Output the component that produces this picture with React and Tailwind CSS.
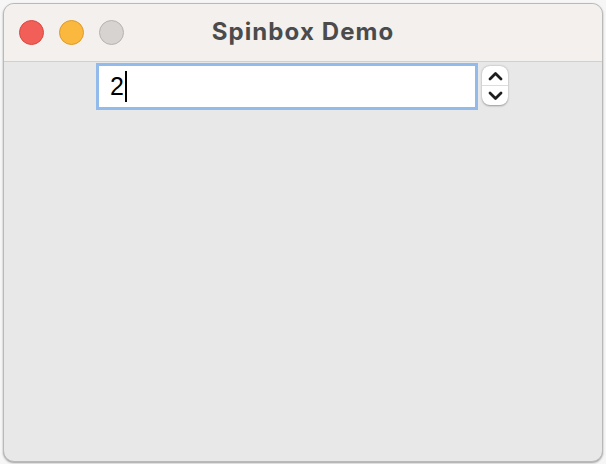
import React from "react";

// Small stepper arrows beside the field
const Chevron = ({ up }) => (
  <svg width="15" height="10" viewBox="0 0 15 10" fill="none">
    <path
      d={up ? "M2 8 L7.5 2.5 L13 8" : "M2 2 L7.5 7.5 L13 2"}
      stroke="#1e1e1e"
      strokeWidth="2.8"
      strokeLinecap="round"
      strokeLinejoin="round"
    />
  </svg>
);

const TrafficLights = () => (
  <div className="flex items-center gap-[15px] pl-[15px]">
    <div className="w-[25px] h-[25px] rounded-full bg-[#f25f58] border border-[#d9493f]"></div>
    <div className="w-[25px] h-[25px] rounded-full bg-[#fbb83e] border border-[#dd9a2a]"></div>
    <div className="w-[25px] h-[25px] rounded-full bg-[#d7d3d0] border border-[#b8b3af]"></div>
  </div>
);

export default function App() {
  return (
    <div className="w-[606px] h-[464px] bg-[#f6f6f6] p-[3px] pb-[2px]" style={{ fontFamily: "'Liberation Sans', Arial, sans-serif" }}>
      <div className="w-full h-full rounded-[11px] border border-[#b9b9b9] shadow-[0_1px_2px_rgba(0,0,0,0.35)] overflow-hidden flex flex-col bg-[#e8e8e8]">
        {/* Title bar */}
        <div className="relative h-[58px] bg-[#f3f0ee] border-b border-[#d2d0ce] flex items-center shrink-0">
          <TrafficLights />
          <div
            className="absolute inset-0 flex items-center justify-center pb-[1px] text-[24px] font-bold tracking-[1.1px] text-[#4b4b4b]"
            style={{ fontFamily: "Inter, 'Liberation Sans', sans-serif" }}
          >
            Spinbox Demo
          </div>
        </div>

        {/* Content */}
        <div className="flex-1 flex justify-center pt-[1px] pr-[2px]">
          <div className="flex items-start gap-[4px]">
            <div className="w-[382px] h-[47px] border-[3px] border-[#92bbec] bg-white flex items-center pl-[11px]">
              <span className="text-[25px] text-black leading-none">2</span>
              <span className="w-[2px] h-[31px] bg-black ml-[1px]"></span>
            </div>
            <div className="mt-[3px] w-[26px] h-[39px] rounded-[8px] bg-white shadow-[0_0.5px_2px_rgba(0,0,0,0.35)] flex flex-col">
              <div className="flex-1 flex items-center justify-center border-b border-[#dcdcdc]">
                <Chevron up />
              </div>
              <div className="flex-1 flex items-center justify-center">
                <Chevron />
              </div>
            </div>
          </div>
        </div>
      </div>
    </div>
  );
}
